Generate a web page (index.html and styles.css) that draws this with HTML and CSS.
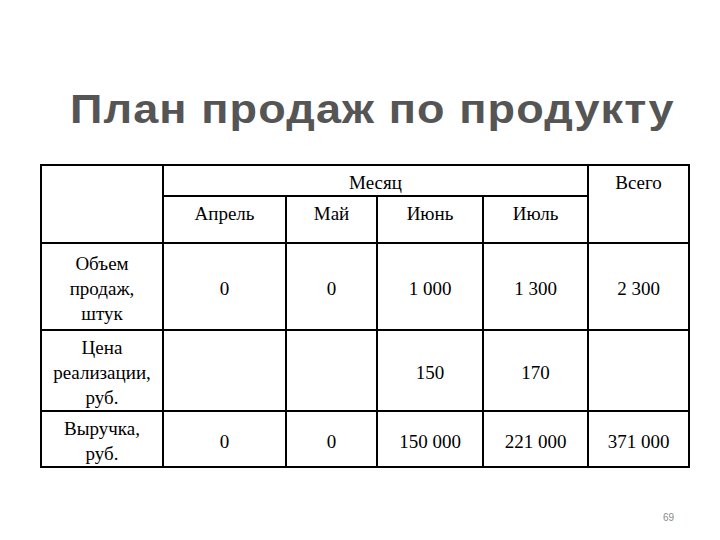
FILE: index.html
```html
<!DOCTYPE html>
<html lang="ru">
<head>
<meta charset="utf-8">
<link rel="stylesheet" href="styles.css">
</head>
<body>
<div class="slide">
  <h1 class="title">План продаж по продукту</h1>
  <table class="plan">
    <colgroup>
      <col class="c-label">
      <col class="c-apr">
      <col class="c-may">
      <col class="c-jun">
      <col class="c-jul">
      <col class="c-total">
    </colgroup>
    <thead>
      <tr class="h1">
        <th rowspan="2"></th>
        <th colspan="4">Месяц</th>
        <th rowspan="2">Всего</th>
      </tr>
      <tr class="h2">
        <th>Апрель</th>
        <th>Май</th>
        <th>Июнь</th>
        <th>Июль</th>
      </tr>
    </thead>
    <tbody>
      <tr class="r1">
        <td>Объем<br>продаж,<br>штук</td>
        <td>0</td>
        <td>0</td>
        <td>1 000</td>
        <td>1 300</td>
        <td>2 300</td>
      </tr>
      <tr class="r2">
        <td>Цена<br>реализации,<br>руб.</td>
        <td></td>
        <td></td>
        <td>150</td>
        <td>170</td>
        <td></td>
      </tr>
      <tr class="r3">
        <td>Выручка,<br>руб.</td>
        <td>0</td>
        <td>0</td>
        <td>150 000</td>
        <td>221 000</td>
        <td>371 000</td>
      </tr>
    </tbody>
  </table>
  <div class="page-num">69</div>
</div>
</body>
</html>
```

FILE: styles.css
```css
html, body {
  margin: 0;
  padding: 0;
  background: #ffffff;
}

.slide {
  width: 720px;
  height: 540px;
  display: flex;
  flex-direction: column;
  align-items: flex-start;
  padding: 0 0 0 40px;
  box-sizing: border-box;
}

.title {
  margin: 86px 0 0 30px;
  font-family: "Liberation Sans", Arial, sans-serif;
  font-weight: bold;
  font-size: 40px;
  line-height: 46px;
  letter-spacing: 1px;
  color: #555555;
  white-space: nowrap;
  transform: scaleX(1.125);
  transform-origin: left center;
}

.plan {
  margin-top: 32px;
  border-collapse: collapse;
  table-layout: fixed;
  width: 650px;
  font-family: "Liberation Serif", "Times New Roman", serif;
  font-size: 19px;
  line-height: 25px;
  color: #000;
}

.c-label { width: 122px; }
.c-apr { width: 123px; }
.c-may { width: 91px; }
.c-jun { width: 106px; }
.c-jul { width: 105px; }
.c-total { width: 101px; }

.plan th,
.plan td {
  border: 2px solid #000;
  padding: 0;
  text-align: center;
  font-weight: normal;
  font-family: "Liberation Serif", "Times New Roman", serif;
  font-size: 19px;
}

.plan th {
  vertical-align: top;
  padding-top: 4px;
}

.plan td {
  vertical-align: middle;
  padding-top: 4px;
}

.h1 { height: 31px; }
.h2 { height: 47px; }
.r1 { height: 87px; }
.r2 { height: 79px; }
.r3 { height: 56px; }

.page-num {
  margin: 44px 0 0 623px;
  font-family: "Liberation Sans", Arial, sans-serif;
  font-size: 10px;
  color: #8a8a8a;
}
```
